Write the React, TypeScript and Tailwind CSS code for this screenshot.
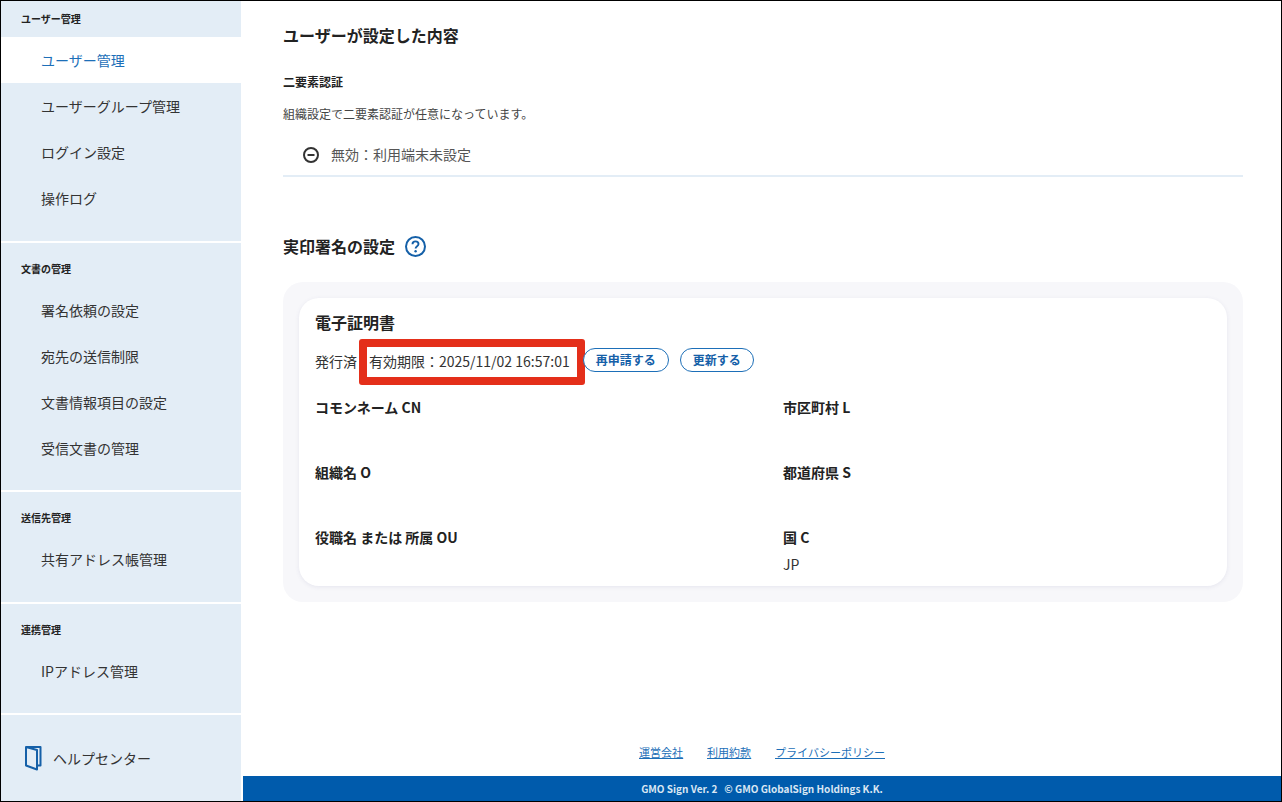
const font = { fontFamily: '"Noto Sans CJK JP", "Noto Sans", sans-serif' };

function NavSection({ title, items, first, active, bottom }: { title: string; items: string[]; first?: boolean; active?: string; bottom?: string }) {
  return (
    <section className={`bg-[#e3edf6] ${bottom ?? "pb-5"} ${first ? "pt-[9px]" : "pt-[17px]"}`}>
      <h2 className="h-[18px] pl-5 text-[10px] leading-[18px] font-bold text-[#222222]">{title}</h2>
      <ul className="mt-[9px]">
        {items.map((item) => (
          <li
            key={item}
            className={`h-[46px] pl-10 text-sm leading-[46px] ${item === active ? "bg-white text-[#1d6fb8]" : "text-[#333333]"}`}
          >
            {item}
          </li>
        ))}
      </ul>
    </section>
  );
}

function Field({ label, value }: { label: string; value?: string }) {
  return (
    <div className="h-[65px]">
      <div className="text-sm leading-5 font-bold text-[#222222]">{label}</div>
      {value && <div className="mt-[7px] text-sm leading-5 text-[#333333]">{value}</div>}
    </div>
  );
}

function PillButton({ children, className }: { children: string; className: string }) {
  return (
    <button className={`h-6 -translate-y-px rounded-full border border-[#1d6fb8] bg-white text-xs font-bold text-[#1560a8] ${className}`}>
      {children}
    </button>
  );
}

export default function App() {
  return (
    <div style={font} className="flex h-[802px] w-[1282px] overflow-hidden border border-black bg-white">
      <aside className="flex w-[240px] shrink-0 flex-col gap-[2px]">
        <NavSection first title="ユーザー管理" active="ユーザー管理" items={["ユーザー管理", "ユーザーグループ管理", "ログイン設定", "操作ログ"]} />
        <NavSection bottom="pb-[19px]" title="文書の管理" items={["署名依頼の設定", "宛先の送信制限", "文書情報項目の設定", "受信文書の管理"]} />
        <NavSection title="送信先管理" items={["共有アドレス帳管理"]} />
        <NavSection bottom="pb-[19px]" title="連携管理" items={["IPアドレス管理"]} />
        <div className="flex flex-1 items-center gap-[11px] bg-[#e3edf6] pl-[23px]">
          <svg width="18" height="26" viewBox="0 0 18 26" fill="none" stroke="#1560a8" strokeWidth="2" strokeLinejoin="round">
            <path d="M2 2 H16.5 V20.5 H13" />
            <path d="M2 2 L13 5 V24.5 L2 20.5 Z" />
          </svg>
          <span className="text-sm text-[#333333]">ヘルプセンター</span>
        </div>
      </aside>

      <main className="ml-[2px] flex min-w-0 flex-1 flex-col">
        <div className="flex-1 pt-[21px] pr-[38px] pl-10">
          <h1 className="text-base leading-[26px] font-bold text-[#222222]">ユーザーが設定した内容</h1>
          <h2 className="mt-[25px] text-xs leading-[18px] font-bold text-[#222222]">二要素認証</h2>
          <p className="mt-[14px] text-xs leading-[18px] text-[#444444]">組織設定で二要素認証が任意になっています。</p>
          <div className="mt-[15px] flex h-[39px] items-start gap-3 border-b-2 border-[#e3edf6] pt-[7px] pl-5">
            <svg className="mt-[2px]" width="16" height="16" viewBox="0 0 16 16" fill="none" stroke="#333333" strokeWidth="2">
              <circle cx="8" cy="8" r="7" />
              <path d="M4.5 8 H11.5" />
            </svg>
            <span className="-mt-px text-sm leading-5 text-[#555555]">無効：利用端末未設定</span>
          </div>

          <div className="mt-[57px] flex h-6 items-center gap-[10px]">
            <h2 className="text-base font-bold text-[#222222]">実印署名の設定</h2>
            <svg width="21" height="21" viewBox="0 0 21 21" fill="none">
              <circle cx="10.5" cy="10.5" r="9.5" stroke="#1560a8" strokeWidth="2" />
              <path d="M7.5 8.2 C7.5 6.4 8.9 5.4 10.5 5.4 C12.2 5.4 13.5 6.4 13.5 8 C13.5 10.2 10.6 10.2 10.6 12.6" stroke="#1560a8" strokeWidth="1.9" fill="none" />
              <circle cx="10.6" cy="15.3" r="1.2" fill="#1560a8" />
            </svg>
          </div>

          <div className="mt-6 rounded-[20px] bg-[#f7f7fa] p-4">
            <div className="h-[288px] rounded-[20px] bg-white px-4 pt-3 shadow-[0_1px_4px_rgba(80,80,140,0.1)]">
              <h3 className="text-base leading-[24px] font-bold text-[#222222]">電子証明書</h3>
              <div className="mt-[15px] flex h-6 items-center text-sm text-[#333333]">
                <span>発行済</span>
                <span className="relative ml-3 leading-6 whitespace-nowrap">
                  有効期限：2025/11/02 16:57:01
                  <span className="absolute -top-[10px] -right-[15px] -bottom-[12px] -left-[10px] rounded-[3px] border-[8px] border-[#e42f1a]" />
                </span>
                <PillButton className="ml-[13px] w-[86px]">再申請する</PillButton>
                <PillButton className="ml-[11px] w-[74px]">更新する</PillButton>
              </div>
              <div className="mt-6 grid grid-cols-[468px_1fr]">
                <Field label="コモンネーム CN" />
                <Field label="市区町村 L" />
                <Field label="組織名 O" />
                <Field label="都道府県 S" />
                <Field label="役職名 または 所属 OU" />
                <Field label="国 C" value="JP" />
              </div>
            </div>
          </div>
        </div>

        <nav className="flex h-[22px] items-center justify-center gap-6 text-[11px] text-[#1d6fb8] underline">
          <a>運営会社</a>
          <a>利用約款</a>
          <a>プライバシーポリシー</a>
        </nav>
        <footer className="mt-[13px] flex h-[25px] items-center justify-center bg-[#005bac] text-[10px] font-bold text-[#d9e6f3]">
          GMO Sign Ver. 2&nbsp;&nbsp;&nbsp;© GMO GlobalSign Holdings K.K.
        </footer>
      </main>
    </div>
  );
}
